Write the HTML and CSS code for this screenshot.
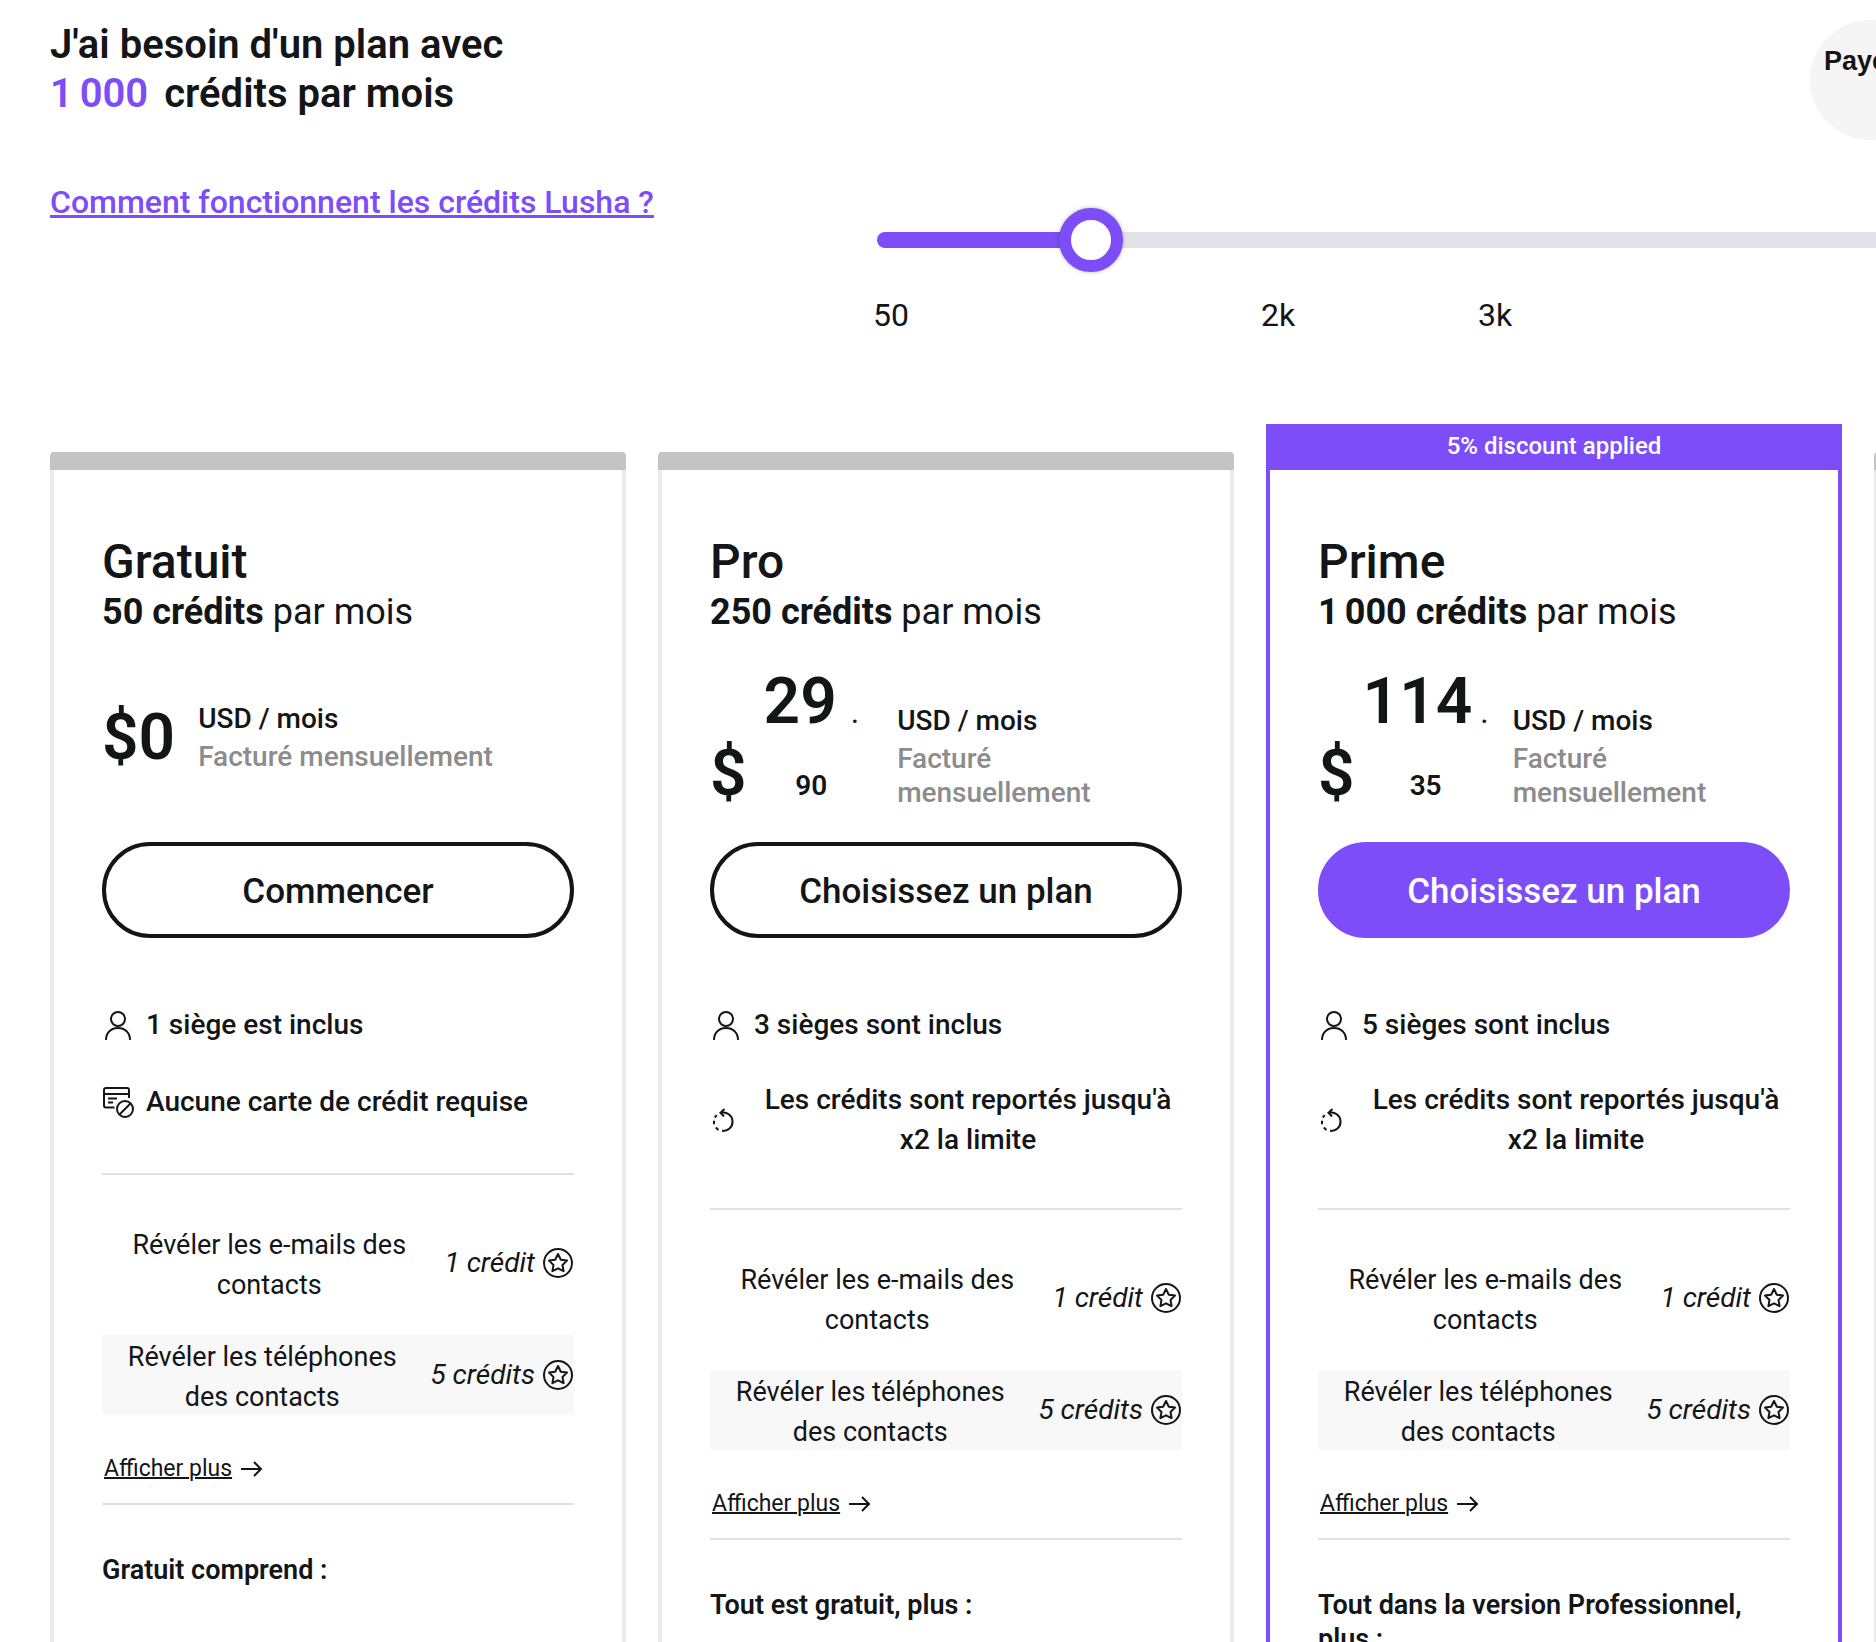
FILE: index.html
```
<!DOCTYPE html>
<html lang="fr">
<head>
    <meta charset="UTF-8">
    <meta name="viewport" content="width=device-width, initial-scale=1.0">
    <title>Tarifs Lusha</title>
    <link rel="stylesheet" href="styles.css">
</head>
<body>
    <!-- shared icons -->
    <svg class="sprite" aria-hidden="true">
        <symbol id="icon-user" viewBox="0 0 32 32">
            <circle cx="16" cy="10" r="7"/>
            <path d="M4 31c0-7.500 5-12 12-12s12 4.500 12 12"/>
        </symbol>
        <symbol id="icon-no-card" viewBox="0 0 32 32">
            <path d="M12.500 21.500H4a2 2 0 0 1-2-2V4a2 2 0 0 1 2-2h21a2 2 0 0 1 2 2v8M2 8h25M6 12.500h9M6 16.500h5"/>
            <circle cx="23" cy="23" r="8"/>
            <path d="M17.500 28.500l11-11"/>
        </symbol>
        <symbol id="icon-rollover" viewBox="0 0 32 32">
            <path d="M11 8.800a9.200 9.200 0 1 1 1 18M14.500 5l-4 3.800 3.500 3.700M6.700 11.200l-1.900 2.300M4 16.800v3.400M5.800 23.600l2.600 2.400"/>
        </symbol>
        <symbol id="icon-star" viewBox="0 0 30 30">
            <circle cx="15" cy="15" r="14"/>
            <path stroke-linejoin="round" d="M15 6l2.800 5.700 6.200.9-4.500 4.400 1.100 6.200-5.600-2.900-5.600 2.900 1.100-6.200-4.500-4.400 6.200-.9z"/>
        </symbol>
        <symbol id="icon-arrow" viewBox="0 0 24 20">
            <path d="M1 10h20M14 3l7 7-7 7"/>
        </symbol>
    </svg>

    <div class="page">
        <header class="top">
            <h1>J'ai besoin d'un plan avec<br><span class="count">1&#8198;000</span>crédits par mois</h1>
            <div class="billing">
                <button type="button" class="billing-option">Payez au mois</button>
            </div>
        </header>

        <section class="picker">
            <a class="how" href="#credits">Comment fonctionnent les crédits Lusha ?</a>
            <div class="slider">
                <input type="range" id="credits" min="0" max="1000" value="147" aria-label="Crédits par mois">
                <div class="ticks">
                    <span>50</span>
                    <span>2k</span>
                    <span>3k</span>
                </div>
            </div>
        </section>

        <main class="plans">
            <article class="plan free">
                <div class="bar"></div>
                <div class="body">
                    <h2>Gratuit</h2>
                    <p class="quota"><strong>50 crédits</strong> par mois</p>
                    <div class="price">
                        <span class="currency">$0</span>
                        <div class="period">
                            <span>USD / mois</span>
                            <span class="billed">Facturé mensuellement</span>
                        </div>
                    </div>
                    <button type="button" class="cta">Commencer</button>
                    <ul class="perks">
                        <li><svg class="icon"><use href="#icon-user"/></svg><span>1 siège est inclus</span></li>
                        <li><svg class="icon"><use href="#icon-no-card"/></svg><span>Aucune carte de crédit requise</span></li>
                    </ul>
                    <ul class="costs">
                        <li><span class="what">Révéler les e-mails des contacts</span><em>1 crédit</em><svg class="star"><use href="#icon-star"/></svg></li>
                        <li class="shaded"><span class="what">Révéler les téléphones des contacts</span><em>5 crédits</em><svg class="star"><use href="#icon-star"/></svg></li>
                    </ul>
                    <a class="more" href="#gratuit"><span>Afficher plus</span><svg><use href="#icon-arrow"/></svg></a>
                    <h3>Gratuit comprend :</h3>
                </div>
            </article>

            <article class="plan">
                <div class="bar"></div>
                <div class="body">
                    <h2>Pro</h2>
                    <p class="quota"><strong>250 crédits</strong> par mois</p>
                    <div class="price">
                        <span class="currency">$</span>
                        <div class="amount"><strong>29</strong><span class="dot">.</span><br><span class="cents">90</span></div>
                        <div class="period">
                            <span>USD / mois</span>
                            <span class="billed">Facturé mensuellement</span>
                        </div>
                    </div>
                    <button type="button" class="cta">Choisissez un plan</button>
                    <ul class="perks">
                        <li><svg class="icon"><use href="#icon-user"/></svg><span>3 sièges sont inclus</span></li>
                        <li><svg class="icon"><use href="#icon-rollover"/></svg><span class="centered">Les crédits sont reportés jusqu'à x2 la limite</span></li>
                    </ul>
                    <ul class="costs">
                        <li><span class="what">Révéler les e-mails des contacts</span><em>1 crédit</em><svg class="star"><use href="#icon-star"/></svg></li>
                        <li class="shaded"><span class="what">Révéler les téléphones des contacts</span><em>5 crédits</em><svg class="star"><use href="#icon-star"/></svg></li>
                    </ul>
                    <a class="more" href="#pro"><span>Afficher plus</span><svg><use href="#icon-arrow"/></svg></a>
                    <h3>Tout est gratuit, plus :</h3>
                </div>
            </article>

            <article class="plan featured">
                <div class="bar">5% discount applied</div>
                <div class="body">
                    <h2>Prime</h2>
                    <p class="quota"><strong>1&#8198;000 crédits</strong> par mois</p>
                    <div class="price">
                        <span class="currency">$</span>
                        <div class="amount"><strong>114</strong><span class="dot">.</span><br><span class="cents">35</span></div>
                        <div class="period">
                            <span>USD / mois</span>
                            <span class="billed">Facturé mensuellement</span>
                        </div>
                    </div>
                    <button type="button" class="cta">Choisissez un plan</button>
                    <ul class="perks">
                        <li><svg class="icon"><use href="#icon-user"/></svg><span>5 sièges sont inclus</span></li>
                        <li><svg class="icon"><use href="#icon-rollover"/></svg><span class="centered">Les crédits sont reportés jusqu'à x2 la limite</span></li>
                    </ul>
                    <ul class="costs">
                        <li><span class="what">Révéler les e-mails des contacts</span><em>1 crédit</em><svg class="star"><use href="#icon-star"/></svg></li>
                        <li class="shaded"><span class="what">Révéler les téléphones des contacts</span><em>5 crédits</em><svg class="star"><use href="#icon-star"/></svg></li>
                    </ul>
                    <a class="more" href="#prime"><span>Afficher plus</span><svg><use href="#icon-arrow"/></svg></a>
                    <h3>Tout dans la version Professionnel, plus :</h3>
                </div>
            </article>

            <article class="plan">
                <div class="bar"></div>
                <div class="body"></div>
            </article>
        </main>
    </div>
</body>
</html>
```
FILE: styles.css
```
* {
    box-sizing: border-box;
}

body {
    margin: 0;
    font-family: Roboto, "Liberation Sans", sans-serif;
    color: #141517;
    background-color: #fff;
    overflow-x: hidden;
}

h1, h2, h3, p, ul {
    margin: 0;
    padding: 0;
}

ul {
    list-style: none;
}

button {
    font-family: inherit;
    color: inherit;
    cursor: pointer;
}

svg {
    flex: none;
    fill: none;
    stroke: currentColor;
    stroke-width: 2;
}

.sprite {
    display: none;
}

.page {
    padding: 20px 0 0 50px;
    overflow: hidden;
}

/* heading + billing switch */
.top {
    display: grid;
    grid-template-columns: 1760px max-content;
}

h1 {
    font-size: 40px;
    line-height: 49px;
    font-weight: 600;
}

.count {
    margin-right: 16px;
    color: #7c4df8;
}

.billing {
    height: 120px;
    padding: 24px 14px;
    border-radius: 60px;
    background-color: #f5f5f5;
}

.billing-option {
    padding: 0;
    border: 0;
    background: none;
    font: bold 27px/34px "Liberation Sans", sans-serif;
}

/* credits slider */
.picker {
    display: grid;
    grid-template-columns: 823px 1304px;
    margin-top: 42px;
}

.how {
    justify-self: start;
    align-self: start;
    font-size: 32px;
    line-height: 40px;
    font-weight: 500;
    color: #7c4df8;
    text-decoration-thickness: 3px;
    text-underline-offset: 2px;
    text-decoration-skip-ink: none;
}

.slider {
    padding-top: 26px;
}

input[type="range"] {
    -webkit-appearance: none;
    appearance: none;
    display: block;
    width: 1300px;
    height: 64px;
    margin: 0 0 0 4px;
    background: none;
}

input[type="range"]::-webkit-slider-runnable-track {
    height: 16px;
    border-radius: 8px;
    background: linear-gradient(to right, #7c4df8 16%, #e4e3e9 16%);
}

input[type="range"]::-webkit-slider-thumb {
    -webkit-appearance: none;
    width: 64px;
    height: 64px;
    margin-top: -24px;
    border: 12px solid #7c4df8;
    border-radius: 50%;
    background-color: #fff;
    box-shadow: 0 0 4px rgba(0, 0, 0, 0.3);
}

.ticks {
    display: grid;
    grid-template-columns: 388px 217px 217px;
    margin-top: 23px;
    font-size: 32px;
    line-height: 40px;
}

/* plan cards */
.plans {
    display: flex;
    gap: 32px;
    margin-top: 89px;
}

.plan {
    display: flex;
    flex-direction: column;
    flex: 0 0 576px;
    margin-top: 28px;
}

.bar {
    height: 18px;
    border-radius: 4px 4px 0 0;
    background-color: #c4c4c4;
}

.body {
    flex: 1;
    padding: 64px 48px 48px;
    border: solid #ebebeb;
    border-width: 0 4px;
}

h2 {
    font-size: 48px;
    line-height: 56px;
    font-weight: 500;
}

.quota {
    font-size: 36px;
    line-height: 44px;
}

.price {
    display: flex;
    align-items: flex-end;
    height: 144px;
    margin: 32px 0;
}

.currency {
    font-size: 64px;
    line-height: 72px;
    font-weight: 600;
}

.amount {
    margin: 0 38px 0 17px;
    font-size: 64px;
    line-height: 72px;
    text-align: center;
}

.amount strong {
    font-weight: 600;
}

.dot {
    margin-left: 14px;
    font-size: 32px;
    line-height: 1;
}

.cents {
    font-size: 28px;
    line-height: 1;
    font-weight: 600;
}

.period {
    display: flex;
    flex-direction: column;
    gap: 4px;
    font-size: 28px;
    line-height: 34px;
    font-weight: 500;
}

.billed {
    color: #8c8c8c;
}

.cta {
    display: block;
    width: 100%;
    height: 96px;
    padding: 4px 0 0;
    border: 4px solid #141517;
    border-radius: 48px;
    background-color: #fff;
    font-size: 35px;
    line-height: 44px;
    font-weight: 500;
}

.perks {
    display: flex;
    flex-direction: column;
    gap: 33px;
    padding: 65px 0 48px;
    border-bottom: 2px solid #e1e1e1;
    font-size: 28px;
    line-height: 40px;
    font-weight: 500;
}

.perks li {
    display: flex;
    align-items: center;
    gap: 12px;
    min-height: 44px;
}

.icon {
    width: 32px;
    height: 32px;
}

.centered {
    flex: 1;
    text-align: center;
}

.costs {
    display: flex;
    flex-direction: column;
    gap: 32px;
    margin-top: 48px;
    font-size: 27px;
    line-height: 40px;
}

.costs li {
    display: flex;
    align-items: center;
    gap: 8px;
    padding-right: 1px;
}

.costs em {
    font-size: 28px;
}

.shaded {
    background-color: #f8f8f8;
}

.what {
    flex: 1;
    padding: 2px 8px 0;
    margin-bottom: -2px;
    text-align: center;
}

.star {
    width: 30px;
    height: 30px;
}

.more {
    display: flex;
    align-items: center;
    gap: 8px;
    margin-top: 38px;
    padding: 0 0 18px 2px;
    color: inherit;
    font-size: 23px;
    line-height: 32px;
    text-decoration-thickness: 2px;
}

.more svg {
    width: 24px;
    height: 20px;
}

h3 {
    padding-top: 48px;
    border-top: 2px solid #e1e1e1;
    font-size: 27px;
    line-height: 34px;
    font-weight: 600;
}

/* free plan: price on a single line */
.free .price {
    align-items: center;
}

.free .currency {
    margin-right: 23px;
}

.free .perks {
    padding-bottom: 49px;
}

/* highlighted plan */
.featured {
    margin-top: 0;
}

.featured .bar {
    height: 46px;
    border-radius: 0;
    background-color: #7c4df8;
    color: #fff;
    font-size: 24px;
    line-height: 44px;
    font-weight: 500;
    text-align: center;
}

.featured .body {
    border-color: #7c4df8;
}

.featured .amount {
    margin: 0 24px 0 8px;
}

.featured .dot {
    margin-left: 8px;
}

.featured .cta {
    border-color: #7c4df8;
    background-color: #7c4df8;
    color: #fff;
}
```
